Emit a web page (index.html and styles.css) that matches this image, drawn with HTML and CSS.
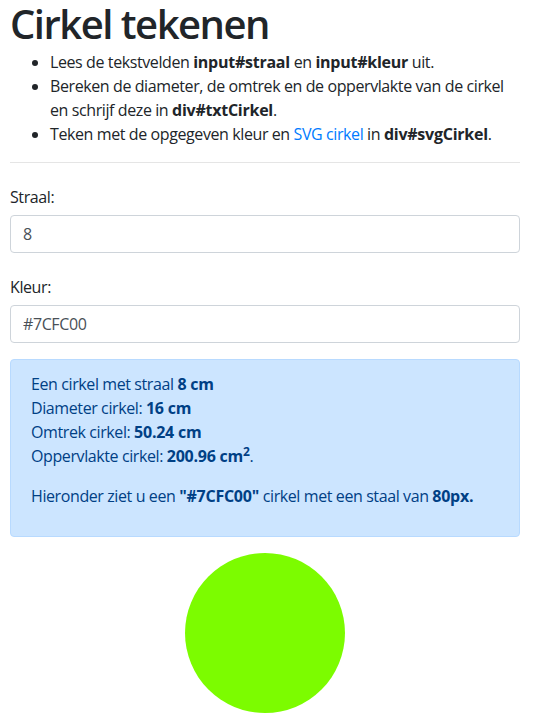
FILE: index.html
```html
<!DOCTYPE html>
<html lang="nl">
<head>
<meta charset="utf-8">
<title>Cirkel tekenen</title>
<link rel="stylesheet" href="styles.css">
</head>
<body>
<div class="container">
  <h1 class="title">Cirkel tekenen</h1>
  <ul class="tasks">
    <li>Lees de tekstvelden <b>input#straal</b> en <b>input#kleur</b> uit.</li>
    <li>Bereken de diameter, de omtrek en de oppervlakte van de cirkel en schrijf deze in <b>div#txtCirkel</b>.</li>
    <li>Teken met de opgegeven kleur en <a href="#" class="link">SVG cirkel</a> in <b>div#svgCirkel</b>.</li>
  </ul>
  <hr class="divider">
  <form class="form">
    <div class="form-group">
      <label class="form-label" for="straal">Straal:</label>
      <input class="form-control" id="straal" type="text" value="8">
    </div>
    <div class="form-group">
      <label class="form-label" for="kleur">Kleur:</label>
      <input class="form-control" id="kleur" type="text" value="#7CFC00">
    </div>
  </form>
  <div class="alert" id="txtCirkel">
    <p class="alert-p">Een cirkel met straal <b>8 cm</b><br>
    Diameter cirkel: <b>16 cm</b><br>
    Omtrek cirkel: <b>50.24 cm</b><br>
    Oppervlakte cirkel: <b>200.96 cm<sup class="sup">2</sup></b>.</p>
    <p class="alert-p">Hieronder ziet u een <b>"#7CFC00"</b> cirkel met een staal van <b>80px.</b></p>
  </div>
  <div class="svg-wrap" id="svgCirkel">
    <svg width="160" height="160" viewBox="0 0 160 160"><circle cx="80" cy="80" r="80" fill="#7CFC00"/></svg>
  </div>
</div>
</body>
</html>
```
FILE: styles.css
```css
* { box-sizing: border-box; }
html, body { margin: 0; padding: 0; background: #fff; }
body {
  font-family: "Open Sans", "Noto Sans", "DejaVu Sans", sans-serif;
  font-size: 16px;
  line-height: 1.5;
  letter-spacing: -0.4px;
  color: #212529;
}
.container { padding: 0 22px 0 10px; }
.title {
  font-size: 40px;
  font-weight: 600;
  line-height: 1.2;
  letter-spacing: -1.5px;
  margin: 0 0 2px 0;
  color: #212529;
}
.tasks { margin: 0 0 16px 0; padding-left: 40px; }
b { font-weight: 700; letter-spacing: -0.25px; }
.link { color: #007bff; text-decoration: none; }
.divider {
  margin: 16px 0 22px 0;
  border: 0;
  border-top: 1px solid rgba(0,0,0,.1);
  height: 0;
}
.form { margin: 0; }
.form-group { margin-bottom: 22px; }
.form-group:last-child { margin-bottom: 16px; }
.form-label { display: block; margin-bottom: 6px; }
.form-control {
  display: block;
  width: 100%;
  height: 38px;
  padding: 6px 12px;
  font-family: inherit;
  font-size: 16px;
  line-height: 1.5;
  letter-spacing: inherit;
  color: #495057;
  background: #fff;
  border: 1px solid #ced4da;
  border-radius: 4px;
  margin: 0;
}
.alert {
  padding: 12px 20px;
  margin-bottom: 16px;
  border: 1px solid #b8daff;
  border-radius: 4px;
  background: #cce5ff;
  color: #004085;
}
.alert-p { margin: 0 0 16px 0; }
.sup { font-size: 75%; line-height: 0; position: relative; vertical-align: baseline; top: -.5em; }
.svg-wrap { display: flex; justify-content: center; }
.svg-wrap svg { display: block; }
```
